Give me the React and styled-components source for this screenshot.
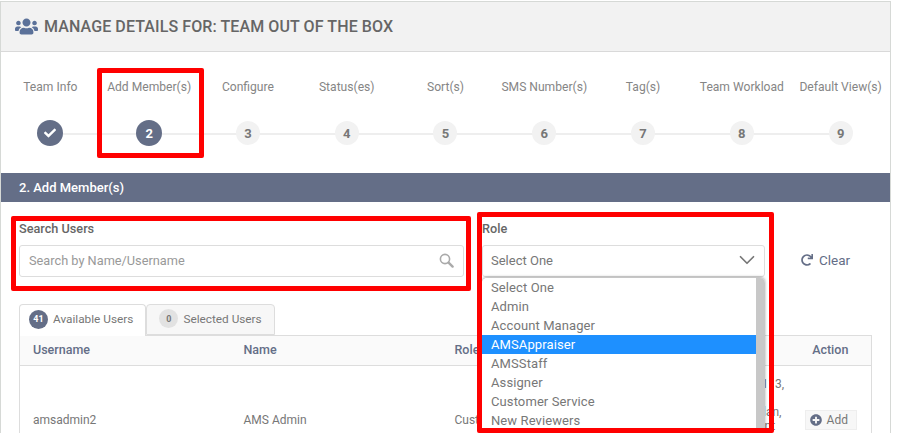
import React from 'react';
import styled, { createGlobalStyle } from 'styled-components';
import { FaUsers, FaCheck, FaRedo, FaPlusCircle } from 'react-icons/fa';
import { ChevronDown } from 'lucide-react';

const GlobalStyle = createGlobalStyle`
  html, body {
    margin: 0;
    height: 433px;
    overflow: hidden;
    background: #fff;
    font-family: Roboto, "Liberation Sans", sans-serif;
    color: #777;
  }
  * { box-sizing: border-box; }
`;

const Page = styled.div`
  position: relative;
  height: 433px;
  overflow: hidden;
  padding-top: 1px;
`;

const Panel = styled.div`
  width: 891px;
  height: 600px;
  border: 1px solid #d6d9d6;
  border-bottom: 0;
`;

const Header = styled.div`
  display: flex;
  align-items: center;
  gap: 6px;
  height: 50px;
  padding: 0 14px;
  background: #f2f2f2;
  border-bottom: 1px solid #d9d9d9;
`;

const Title = styled.h1`
  margin: 0;
  font-size: 16px;
  font-weight: 500;
  letter-spacing: 0.1px;
  color: #666;
`;

const Steps = styled.div`
  display: grid;
  grid-template-columns: repeat(9, 1fr);
  height: 121px;
  padding-top: 28px;
`;

const Step = styled.div`
  position: relative;
  display: flex;
  flex-direction: column;
  align-items: center;
  gap: 27px;

  &:not(:last-child)::after {
    content: '';
    position: absolute;
    top: 53px;
    left: 50%;
    width: 100%;
    height: 2px;
    background: #eee;
  }
`;

const StepLabel = styled.div`
  font-size: 12.1px;
  line-height: 14px;
  white-space: nowrap;
  color: #858585;
`;

const StepDot = styled.div`
  position: relative;
  z-index: 1;
  display: flex;
  align-items: center;
  justify-content: center;
  width: ${p => (p.$active ? 26 : 24)}px;
  height: ${p => (p.$active ? 26 : 24)}px;
  margin-top: ${p => (p.$active ? -1 : 0)}px;
  border-radius: 50%;
  font-size: 13px;
  font-weight: 700;
  background: ${p => (p.$active ? '#646e87' : '#f2f2f2')};
  color: ${p => (p.$active ? '#fff' : '#777')};
`;

const SectionBar = styled.div`
  height: 29px;
  padding-left: 18px;
  font-size: 13px;
  font-weight: 500;
  line-height: 29px;
  color: #fff;
  background: #646e87;
`;

const Body = styled.div`
  padding: 18px 18px 0;
`;

const FilterRow = styled.div`
  display: flex;
  align-items: flex-start;
  gap: 18px;
`;

const Field = styled.div`
  position: relative;
  width: ${p => p.$width}px;
`;

const FieldLabel = styled.div`
  height: 25px;
  padding-top: 1px;
  font-size: 12.7px;
  font-weight: 500;
  line-height: 15px;
  color: #666;
`;

const InputBox = styled.div`
  display: flex;
  align-items: center;
  justify-content: space-between;
  height: 32px;
  padding: 0 9px 2px ${p => (p.$muted ? 9 : 8)}px;
  border: 1px solid #ddd;
  border-radius: 3px;
  background: #fff;
  font-size: ${p => (p.$muted ? 12.75 : 13)}px;
  color: ${p => (p.$muted ? '#999' : '#777')};
`;

const SearchIcon = styled.svg`
  display: block;
  width: 15px;
  height: 15px;
  margin-top: 1px;
`;

const SelectArrow = styled(ChevronDown)`
  margin-right: -5px;
`;

const Dropdown = styled.div`
  position: absolute;
  z-index: 2;
  top: 58px;
  left: 0;
  display: flex;
  width: 283px;
  height: 200px;
  background: #fff;
  border-radius: 5px 5px 0 0;
  overflow: hidden;
  box-shadow: 0 -1px 3px rgba(0, 0, 0, 0.35);
`;

const OptionList = styled.div`
  flex: 1;
`;

const Option = styled.div`
  height: 19px;
  padding-left: 9px;
  font-size: 13px;
  line-height: 19px;
  letter-spacing: 0.1px;
  background: ${p => (p.$selected ? '#1e90ff' : '#fff')};
  color: ${p => (p.$selected ? '#fff' : '#777')};
`;

const ScrollTrack = styled.div`
  width: 9px;
  background: #c8c8c8;
`;

const ClearButton = styled.div`
  display: flex;
  align-items: center;
  gap: 6px;
  margin: 32px 0 0 18px;
  font-size: 13.5px;
  color: #646e87;
`;

const TabRow = styled.div`
  display: flex;
  margin-top: 27px;
`;

const Tab = styled.div`
  position: relative;
  z-index: 1;
  display: flex;
  align-items: center;
  gap: 5px;
  height: ${p => (p.$active ? 32 : 31)}px;
  margin-bottom: ${p => (p.$active ? -1 : 0)}px;
  padding: 0 12px ${p => (p.$active ? 3 : 2)}px ${p => (p.$active ? 9 : 12)}px;
  border: 1px solid #ddd;
  border-bottom: ${p => (p.$active ? 0 : '1px solid #ddd')};
  border-radius: 4px 4px 0 0;
  background: ${p => (p.$active ? '#fff' : '#f7f7f7')};
  font-size: 11.8px;
  color: #777;
`;

const Count = styled.span`
  display: flex;
  align-items: center;
  justify-content: center;
  width: 19px;
  height: 19px;
  border-radius: 50%;
  font-size: 9px;
  font-weight: 700;
  background: ${p => (p.$active ? '#646e87' : '#e2e2e2')};
  color: ${p => (p.$active ? '#fff' : '#777')};
`;

const Table = styled.table`
  width: 853px;
  border-collapse: collapse;
  table-layout: fixed;
  border: 1px solid #ddd;
  font-size: 12px;
`;

const HeadCell = styled.th`
  height: 30px;
  padding: 0 13px 2px;
  border-bottom: 1px solid #ddd;
  background: #fafafa;
  font-size: 12.5px;
  font-weight: 500;
  text-align: ${p => p.$align || 'left'};
  color: #646e87;
`;

const Cell = styled.td`
  height: 108px;
  padding: 0 13px;
  line-height: 14px;
  color: #777;
  text-align: ${p => p.$align || 'left'};
`;

const TeamCell = styled(Cell)`
  padding-top: 11px;
  vertical-align: top;
  white-space: nowrap;
`;

const AddButton = styled.span`
  display: inline-flex;
  align-items: center;
  gap: 5px;
  height: 20px;
  margin-left: 1px;
  padding: 0 8px 0 4px;
  border: 1px solid #eee;
  background: #f7f7f7;
  color: #777;
`;

const Highlight = styled.div`
  position: absolute;
  z-index: 3;
  top: ${p => p.$top}px;
  left: ${p => p.$left}px;
  width: ${p => p.$width}px;
  height: ${p => p.$height}px;
  border: 5px solid #f00;
  border-radius: 2px;
  pointer-events: none;
`;

const steps = ['Team Info', 'Add Member(s)', 'Configure', 'Status(es)', 'Sort(s)', 'SMS Number(s)', 'Tag(s)', 'Team Workload', 'Default View(s)'];
const roles = ['Select One', 'Admin', 'Account Manager', 'AMSAppraiser', 'AMSStaff', 'Assigner', 'Customer Service', 'New Reviewers'];

export default function App() {
  return (
    <Page>
      <GlobalStyle />
      <Panel>
        <Header>
          <FaUsers size={23} color="#5b7199" />
          <Title>MANAGE DETAILS FOR: TEAM OUT OF THE BOX</Title>
        </Header>
        <Steps>
          {steps.map((label, i) => (
            <Step key={label}>
              <StepLabel>{label}</StepLabel>
              <StepDot $active={i < 2}>{i === 0 ? <FaCheck size={12} /> : i + 1}</StepDot>
            </Step>
          ))}
        </Steps>
        <SectionBar>2. Add Member(s)</SectionBar>
        <Body>
          <FilterRow>
            <Field $width={445}>
              <FieldLabel>Search Users</FieldLabel>
              <InputBox $muted>
                Search by Name/Username
                <SearchIcon viewBox="0 0 15 15" fill="none" stroke="#aaa">
                  <circle cx="6" cy="6" r="4.6" strokeWidth="1.6" />
                  <path d="M9.6 9.6 L13.6 13.6" strokeWidth="2.4" strokeLinecap="round" />
                </SearchIcon>
              </InputBox>
            </Field>
            <Field $width={283}>
              <FieldLabel>Role</FieldLabel>
              <InputBox>
                Select One
                <SelectArrow size={26} color="#777" strokeWidth={1.6} />
              </InputBox>
              <Dropdown>
                <OptionList>
                  {roles.map(role => (
                    <Option key={role} $selected={role === 'AMSAppraiser'}>{role}</Option>
                  ))}
                </OptionList>
                <ScrollTrack />
              </Dropdown>
            </Field>
            <ClearButton>
              <FaRedo size={12} />
              Clear
            </ClearButton>
          </FilterRow>
          <TabRow>
            <Tab $active>
              <Count $active>41</Count>
              Available Users
            </Tab>
            <Tab>
              <Count>0</Count>
              Selected Users
            </Tab>
          </TabRow>
          <Table>
            <colgroup>
              <col width="211" />
              <col width="211" />
              <col width="274" />
              <col />
              <col width="82" />
            </colgroup>
            <thead>
              <tr>
                <HeadCell>Username</HeadCell>
                <HeadCell>Name</HeadCell>
                <HeadCell>Role</HeadCell>
                <HeadCell>Team</HeadCell>
                <HeadCell $align="center">Action</HeadCell>
              </tr>
            </thead>
            <tbody>
              <tr>
                <Cell>amsadmin2</Cell>
                <Cell>AMS Admin</Cell>
                <Cell>Customer Service</Cell>
                <TeamCell>Team 113,<br />Team,<br />New Plan,<br />Resident</TeamCell>
                <Cell $align="center">
                  <AddButton><FaPlusCircle size={12} color="#646e87" />Add</AddButton>
                </Cell>
              </tr>
            </tbody>
          </Table>
        </Body>
      </Panel>
      <Highlight $top={68} $left={97} $width={107} $height={90} />
      <Highlight $top={216} $left={11} $width={460} $height={75} />
      <Highlight $top={212} $left={477} $width={297} $height={221} />
    </Page>
  );
}
